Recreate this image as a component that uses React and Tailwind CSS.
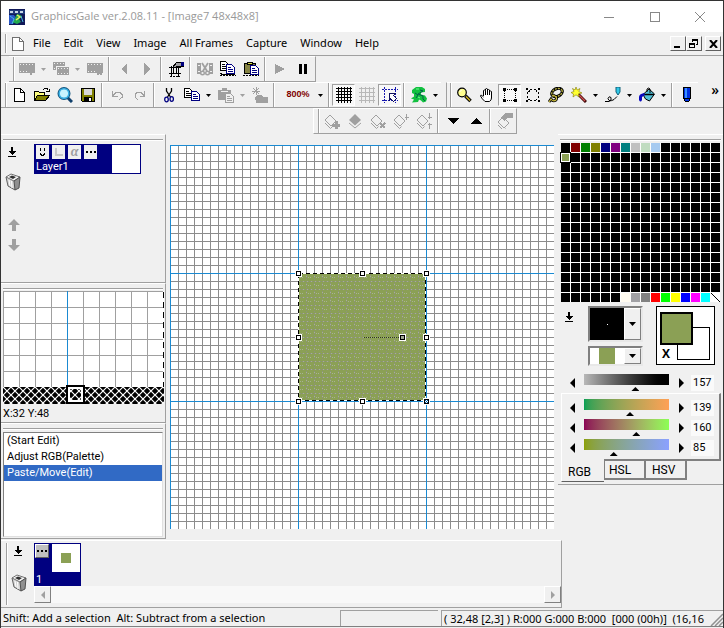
import { useState } from 'react';
import clsx from 'clsx';

const MENUS = ['File', 'Edit', 'View', 'Image', 'All Frames', 'Capture', 'Window', 'Help'];

const G = '#a0a0a0';

const Icon = ({ children, w = 16, h = 16 }) => (
  <svg width={w} height={h} viewBox={`0 0 ${w} ${h}`} fill="none" shapeRendering="crispEdges" aria-hidden="true">
    {children}
  </svg>
);

const Film = ({ x = 0, y = 0, w = 16, h = 10 }) => (
  <g>
    <rect x={x} y={y} width={w} height={h} fill={G} />
    <path d={`M${x + 1} ${y + 1.5}h${w - 1}M${x + 1} ${y + h - 1.5}h${w - 1}`} stroke="#f0f0f0" strokeDasharray="1 2" />
  </g>
);

const Page = ({ x, y, stroke = '#000', fill = '#fff' }) => (
  <g>
    <path d={`M${x + 0.5} ${y + 0.5}h5l3 3v6h-8z`} fill={fill} stroke={stroke} />
    <path d={`M${x + 2} ${y + 3.5}h3M${x + 2} ${y + 5.5}h5M${x + 2} ${y + 7.5}h5`} stroke={stroke} />
  </g>
);

const Diamond = ({ y = 3 }) => (
  <g shapeRendering="auto">
    <path d={`M1 ${y + 7}l5.5 5.5 2-2M1 ${y + 4}l5-5 6 6-5 5z`} stroke={G} />
  </g>
);

const icons = {
  doc: <Icon><path d="M2.5 1.5h7l4 4v9h-11z" fill="#fff" stroke="#707070" /><path d="M9.5 1.5v4h4" stroke="#707070" /></Icon>,
  // animation bar
  addFrame: <Icon><Film y={2} /><path d="M9 10h6l-2 2v2h-2v-2z" fill={G} /></Icon>,
  dupFrame: <Icon><Film y={1} w={12} h={8} /><path d="M3 5h13v10H3z" fill="#f0f0f0" /><Film x={4} y={6} w={12} h={8} /></Icon>,
  delFrame: <Icon><Film y={2} /><path d="M10 9l5 5M15 9l-5 5" stroke={G} strokeWidth="2" /></Icon>,
  prev: <Icon><path d="M11 2v12L5 8z" fill={G} /></Icon>,
  next: <Icon><path d="M5 2v12l6-6z" fill={G} /></Icon>,
  frameProp: (
    <Icon>
      <path d="M1 6.5h12M1 12.5h12M3.5 5v11M10.5 5v11M5.5 7v5M8.5 7v5" stroke="#000" />
      <path d="M4.5 6.5l4-5h5l2 1v3h-6l-2 1z" fill="#a0a0a4" stroke="#000" />
      <path d="M13 1h3v4h-3z" fill="#000080" />
      <path d="M2 15.5h10" stroke="#000" strokeDasharray="2 1" />
    </Icon>
  ),
  cutFrame: (
    <Icon>
      <path d="M0 2h4v11H0zM12 2h4v11h-4z" fill={G} />
      <path d="M1 4.5h2M1 10.5h2M13 4.5h2M13 10.5h2" stroke="#f0f0f0" />
      <g shapeRendering="auto">
        <path d="M5 2l5 8M11 2l-5 8" stroke={G} strokeWidth="1.8" />
        <circle cx="5.5" cy="12" r="1.8" stroke={G} strokeWidth="1.4" /><circle cx="10.5" cy="12" r="1.8" stroke={G} strokeWidth="1.4" />
      </g>
    </Icon>
  ),
  copyFrame: (
    <Icon>
      <path d="M0 14.5h16M0 12.5h3" stroke="#000" strokeDasharray="2 1" />
      <path d="M1 13h14" stroke="#000" />
      <Page x={0} y={0} /><Page x={6} y={3} stroke="#000080" />
    </Icon>
  ),
  pasteFrame: (
    <Icon>
      <path d="M0 14.5h16" stroke="#000" strokeDasharray="2 1" />
      <path d="M1.5 2.5h11v10h-11z" fill="#848242" stroke="#000" />
      <path d="M4.5 1.5h5v2h-5z" fill="#e0e040" stroke="#000" />
      <Page x={7} y={4} stroke="#000080" />
    </Icon>
  ),
  play: <Icon><path d="M3 3v10l10-5z" fill={G} /></Icon>,
  pause: <Icon><path d="M4 3h3v10H4zM9 3h3v10H9z" fill="#000" /></Icon>,
  // standard bar
  newFile: <Icon><path d="M3.5 1.5h6l4 4v9h-10z" fill="#fff" stroke="#000" /><path d="M9.5 1.5v4h4" stroke="#000" /></Icon>,
  open: (
    <Icon>
      <path d="M0.5 13.5v-9h4l1 1h5v2" fill="#ffff80" stroke="#000" />
      <path d="M0.5 13.5l3-5h12l-4 5z" fill="#808000" stroke="#000" />
      <path d="M9 2.5l2-1h2l1.5 2M12 4.5h3v-3" stroke="#000" />
    </Icon>
  ),
  browse: (
    <Icon>
      <g shapeRendering="auto">
        <path d="M10.5 10.5l4.500 4.500" stroke="#10406c" strokeWidth="3" />
        <circle cx="7" cy="6.5" r="5.5" fill="#c8f4ff" stroke="#10527c" strokeWidth="2" />
        <circle cx="7" cy="6.5" r="4.8" stroke="#3cb4e8" strokeWidth="1.5" />
      </g>
    </Icon>
  ),
  save: (
    <Icon>
      <path d="M1.5 1.5h13v13h-12l-1-1z" fill="#808000" stroke="#000" />
      <path d="M4 2h8v6H4z" fill="#d8d8d8" /><path d="M4 10h8v4H4z" fill="#000" /><path d="M9 11h2v3H9z" fill="#fff" />
    </Icon>
  ),
  undo: <Icon><path d="M3.5 4v5h5M4 8.5l3-3h4l2 2v3l-3 2" stroke={G} /></Icon>,
  redo: <Icon><path d="M12.5 4v5h-5M12 8.5l-3-3h-4l-2 2v3l3 2" stroke={G} /></Icon>,
  cut: (
    <Icon>
      <g shapeRendering="auto">
        <path d="M5.5 1v3l4 6M10.5 1v3l-4 6" stroke="#000" strokeWidth="1.3" />
        <ellipse cx="5.5" cy="12.5" rx="1.8" ry="2.3" stroke="#000080" strokeWidth="1.3" />
        <ellipse cx="10.7" cy="12" rx="1.7" ry="2.3" stroke="#000080" strokeWidth="1.3" />
      </g>
    </Icon>
  ),
  copy: <Icon><Page x={0} y={1} /><Page x={7} y={4} stroke="#000080" /></Icon>,
  paste: (
    <Icon>
      <path d="M0 3h4V1h5v2h4v10H0z" fill={G} />
      <path d="M3 4h7" stroke="#f0f0f0" />
      <Page x={7} y={6} stroke={G} fill="#f0f0f0" />
    </Icon>
  ),
  effect: (
    <Icon>
      <path d="M1 1l6 6M7 1l-6 6M4 0v8M0 4h8" stroke={G} />
      <path d="M3 10l3-2h4l1 2h5v6H4z" fill={G} />
    </Icon>
  ),
  grid: <Icon><path d="M0 1.5h16M0 4.5h16M0 7.5h16M0 10.5h16M0 13.5h16M2.5 0v16M5.5 0v16M8.5 0v16M11.5 0v16M14.5 0v16" stroke="#000" /></Icon>,
  gridLight: <Icon><path d="M0 1.5h16M0 5.5h16M0 9.5h16M0 13.5h16M2.5 0v16M6.5 0v16M10.5 0v16M14.5 0v16" stroke="#b8b8b8" /></Icon>,
  snap: (
    <Icon>
      <path d="M2.5 0v16M13.5 0v16M0 2.5h16M0 13.5h16" stroke="#1818b0" strokeDasharray="2 1" />
      <path d="M7.5 6.5h6l-2 2 3 3-3 3-3-3-1 2z" fill="#fff" stroke="#101060" />
    </Icon>
  ),
  dragon: (
    <Icon>
      <g shapeRendering="auto">
        <path d="M1 3l4-3h6l3 2v3l-4 .5v2l4 1 2 3-1 3-3 1-2-2-2-1-1 2.5-6 .5 2-3-3-1 3-2V7L1 6z" fill="#12c040" />
        <path d="M9 3l3 1-5 3 5 2v3l2 2M4 6l3 2-2 3" stroke="#006048" />
        <path d="M5 2h3M7 10l2 1" stroke="#70f890" />
      </g>
    </Icon>
  ),
  magnify: (
    <Icon>
      <g shapeRendering="auto">
        <path d="M9.5 9l5 5" stroke="#000" strokeWidth="3.5" /><path d="M10 9.5l4 4" stroke="#d8b820" strokeWidth="1.5" />
        <circle cx="6" cy="5.5" r="4.3" fill="#ffff90" stroke="#000" strokeWidth="1.2" />
        <path d="M3.5 5l2-2" stroke="#fff" />
      </g>
    </Icon>
  ),
  hand: (
    <Icon>
      <g shapeRendering="auto">
        <path d="M4.5 9V3.5q1-1 2 0V2q1-1 2 0v1q1-1 2 0v1.5q1-1 2 0V11q0 2-2 3.5H6Q3 12 1.5 9q0-2 3 1" fill="#fff" stroke="#000" />
        <path d="M6.5 3.5V8M8.5 3v5M10.5 4v4" stroke="#000" />
      </g>
    </Icon>
  ),
  selRect: (
    <Icon>
      <path d="M2.5 2.5h11v11h-11z" stroke="#000" strokeDasharray="1 1" />
      <path d="M1 1h3v3H1zM12 1h3v3h-3zM1 12h3v3H1zM12 12h3v3h-3z" fill="#000" />
    </Icon>
  ),
  selEllipse: (
    <Icon>
      <path d="M5 2.5h6M5 13.5h6M2.5 5v6M13.5 5v6" stroke="#000" strokeDasharray="2 2" />
      <path d="M3 4h1V3h1M12 4h-1V3M3 12h1v1M12 12h-1v1" stroke="#000" />
      <path d="M1 1h2v2H1zM13 1h2v2h-2zM1 13h2v2H1zM13 13h2v2h-2z" fill="#000" />
    </Icon>
  ),
  lasso: (
    <Icon>
      <g shapeRendering="auto">
        <ellipse cx="9" cy="5.5" rx="5.5" ry="3.8" transform="rotate(-25 9 5.5)" stroke="#000" strokeWidth="3.2" />
        <path d="M5 8q5 2 3 5-3 2-5-1l-2 3" stroke="#000" strokeWidth="2.8" />
        <ellipse cx="9" cy="5.5" rx="5.5" ry="3.8" transform="rotate(-25 9 5.5)" stroke="#b8b040" strokeWidth="1.3" strokeDasharray="2 1" />
        <path d="M5 8q5 2 3 5-3 2-5-1l-2 3" stroke="#d0c040" strokeWidth="1.2" />
      </g>
    </Icon>
  ),
  wand: (
    <Icon>
      <g shapeRendering="auto">
        <path d="M7 7l8 8" stroke="#400808" strokeWidth="3" /><path d="M8 8l6 6" stroke="#d05050" strokeWidth="1.3" />
        <path d="M5 0l1.2 3L9 1.5 7.8 4.5 11 6 7.5 6.8 8 10 5 7.8 2 10l.5-3L0 5.5l3-1L1.5 1.5 4 3z" fill="#ffff30" stroke="#807800" strokeWidth=".6" />
      </g>
    </Icon>
  ),
  curve: (
    <Icon>
      <g shapeRendering="auto">
        <path d="M0 14.5h4q3-1 2-4-2-2-3 1 1 4 6 1l3-3" stroke="#000" />
        <path d="M11 0h4v5l-2 3-2-3z" fill="#30c8e8" stroke="#106078" />
      </g>
    </Icon>
  ),
  fill: (
    <Icon>
      <g shapeRendering="auto">
        <path d="M4 7.5L10 2l5.5 5-5 7-4-2z" fill="#50c0d8" stroke="#000" />
        <path d="M5 7.5h10" stroke="#000" strokeWidth="1.5" />
        <path d="M8 5V2q2-2 3 0v4" stroke="#000" />
        <path d="M5 6q-5 1-5 4v3q1.5 3 3 0V10l3-2z" fill="#0808c0" />
      </g>
    </Icon>
  ),
  pen: (
    <Icon>
      <path d="M4.5 0.5h7v11l-2 3h-3l-2-3z" fill="#0030e0" stroke="#000" />
      <path d="M6 1h2v10H6z" fill="#3890ff" /><path d="M5 11.5h6M6 14h4" stroke="#000" />
    </Icon>
  ),
  // layer bar
  addLayer: <Icon><Diamond /><path d="M8 12h8M12 8v8" stroke={G} strokeWidth="3" /></Icon>,
  dupLayer: <Icon><g shapeRendering="auto"><path d="M2 7l6-6 6 6-6 5.5z" fill={G} /><path d="M2 10l6 5 6-5" stroke={G} /></g></Icon>,
  delLayer: <Icon><Diamond /><path d="M10 10l5 5M15 10l-5 5" stroke={G} strokeWidth="2" /></Icon>,
  mergeLayer: <Icon><Diamond /><path d="M13.5 1v6M11.5 4.5h4" stroke={G} strokeWidth="1.5" /></Icon>,
  mergeAll: <Icon><Diamond /><path d="M13.5 0v6M11.5 4.5h4M13.5 16v-6M11.5 11.5h4" stroke={G} strokeWidth="1.5" /></Icon>,
  down: <Icon><path d="M2 5h12l-6 6z" fill="#000" /></Icon>,
  up: <Icon><path d="M2 11h12L8 5z" fill="#000" /></Icon>,
  layerProp: <Icon><Diamond y={5} /><path d="M4 4l4-4h8v5h-5L7 8z" fill={G} /></Icon>,
};

const ANIM_BAR = ['addFrame', '>g', 'dupFrame', '>g', 'delFrame', '|', 'prev', 'next', '|', 'frameProp', '|', 'cutFrame', 'copyFrame', 'pasteFrame', '|', 'play', 'pause'];
const EDIT_BAR = ['newFile', 'open', 'browse', 'save', '|', 'undo', 'redo', '|', 'cut', 'copy', '>', 'paste', '>g', 'effect', '|', '800%', '>', '|', '*grid', 'gridLight', '*snap', '|', 'dragon', '>'];
const TOOL_BAR = ['magnify', 'hand', '*selRect', 'selEllipse', 'lasso', 'wand', '>', 'curve', '>', 'fill', '>', '|', 'pen'];
const LAYER_BAR = ['addLayer', 'dupLayer', 'delLayer', 'mergeLayer', 'mergeAll', '|', 'down', 'up', '|', 'layerProp'];

const ToolItem = ({ id }) => {
  if (id === '|') return <span className="mx-0.5 w-0.5 self-stretch border-r border-white border-l border-l-[#a0a0a0]" />;
  if (id[0] === '>') {
    return (
      <button aria-label="More" className={clsx('flex h-[22px] w-[11px] items-center justify-center', id === '>g' ? 'text-[#a0a0a0]' : 'text-black')}>
        <svg width="5" height="3" viewBox="0 0 5 3"><path d="M0 0h5L2.5 3z" fill="currentColor" /></svg>
      </button>
    );
  }
  if (id === '800%') {
    return <button className="h-[22px] w-[38px] pl-1 font-['Liberation_Sans',sans-serif] text-[9px] font-bold text-[#800000]">800%</button>;
  }
  const pressed = id[0] === '*';
  const name = pressed ? id.slice(1) : id;
  return (
    <button
      aria-label={name}
      aria-pressed={pressed}
      className={clsx('flex h-[22px] w-[23px] items-center justify-center border', pressed ? 'border-t-[#a0a0a0] border-r-white border-b-white border-l-[#a0a0a0] bg-[#f8f8f8]' : 'border-transparent')}
    >
      {icons[name]}
    </button>
  );
};

const ToolBar = ({ items, className }) => (
  <div className={clsx('flex items-center border-t border-t-white', className)}>
    <span className="w-0.5 self-stretch border-r border-white border-l border-l-[#a0a0a0]" />
    {items.map((id, i) => <ToolItem key={i} id={id} />)}
  </div>
);

const PanelGrip = () => <div className="mx-0.5 mt-1 h-0.5 border-t border-[#a0a0a0] border-b border-b-white" />;

const DownMark = () => (
  <Icon w={10} h={10}><path d="M4 0h2v4h3L5 8 1 4h3zM1 9h8v1H1z" fill="#000" /></Icon>
);

const Trash = () => (
  <svg width="16" height="18" viewBox="0 0 16 18" aria-hidden="true">
    <path d="M1 4l2 9 7 4 4-11z" fill="#d4d4d4" stroke="#606060" />
    <path d="M1 4l5-3 9 3-6 4z" fill="#f4f4f4" stroke="#707070" />
    <path d="M4 4l3-1.5 4 1.5-3 2z" fill="#303030" />
    <path d="M9 8l1 9 4-2 1-11z" fill="#909090" stroke="#505050" />
    <path d="M4 7l1 6M6.5 8l.5 7" stroke="#fff" />
  </svg>
);

const BigArrow = ({ flip }) => (
  <svg width="12" height="12" viewBox="0 0 12 12" className={clsx(flip && 'rotate-180')} aria-hidden="true">
    <path d="M6 0l6 6H8v6H4V6H0z" fill={G} />
  </svg>
);

const LayerPanel = () => (
  <section aria-label="Layers" className="h-[149px] border-t border-r border-b border-t-white border-r-[#a0a0a0] border-b-[#a0a0a0]">
    <PanelGrip />
    <div className="flex pt-[3px] pl-1">
      <div className="flex w-[29px] flex-col items-start">
        <button aria-label="Layer menu" className="mt-[3px] ml-0.5"><DownMark /></button>
        <button aria-label="Delete layer" className="mt-4"><Trash /></button>
        <button aria-label="Move up" className="mt-7 ml-[3px]"><BigArrow /></button>
        <button aria-label="Move down" className="mt-2 ml-[3px]"><BigArrow flip /></button>
      </div>
      <div className="flex h-[30px] w-[107px] border border-[#000080] bg-[#000080] text-[11px] text-white">
        <div className="w-[77px] shrink-0">
          <div className="flex gap-[3px] pl-px text-black">
            <button aria-label="Visible" className="h-3.5 w-[13px] bg-[#f0f0f0]">
              <Icon w={13} h={14}><path d="M4.5 3v3M8.5 3v3M4.5 8v1l1 1h2l1-1v-1" stroke="#000" /></Icon>
            </button>
            <button aria-label="Lock" className="h-3.5 w-[13px] bg-[#f0f0f0]">
              <Icon w={13} h={14}><path d="M3.5 3v7h7" stroke="#c8c8c8" strokeWidth="2" /></Icon>
            </button>
            <button className="h-3.5 w-[13px] bg-[#f0f0f0] font-['Liberation_Serif',serif] text-[14px] leading-3 font-bold text-[#a0a0a0] italic">α</button>
            <button aria-label="Layer options" className="h-3.5 w-[13px] bg-[#f0f0f0]">
              <Icon w={13} h={14}><path d="M2 6h2v2H2zM6 6h2v2H6zM10 6h2v2h-2z" fill="#000" /></Icon>
            </button>
          </div>
          <div className="pl-px leading-4">Layer1</div>
        </div>
        <div className="flex-1 bg-white" />
      </div>
    </div>
  </section>
);

const PreviewPanel = () => (
  <section aria-label="Preview" className="h-[140px] border-t border-r border-b border-t-white border-r-[#a0a0a0] border-b-[#a0a0a0]">
    <PanelGrip />
    <svg width="161" height="113" viewBox="0 0 161 113" shapeRendering="crispEdges" className="mt-px ml-0.5 block">
      <defs>
        <pattern id="cells" width="16" height="16" patternUnits="userSpaceOnUse">
          <path d="M0 0h16v1H0zM0 0h1v16H0z" fill="#a0a0a0" />
        </pattern>
        <pattern id="hatch" width="8" height="8" patternUnits="userSpaceOnUse">
          <rect width="8" height="8" fill="#000" />
          <path d="M0 0l8 8M8 0L0 8" stroke="#fff" strokeWidth="1.2" shapeRendering="auto" />
        </pattern>
      </defs>
      <rect width="161" height="96" fill="#fff" />
      <rect width="161" height="96" fill="url(#cells)" />
      <rect x="64" width="1" height="96" fill="#1a8ad2" />
      <path d="M160.5 0v96" stroke="#fff" />
      <path d="M160.5 1v95" stroke="#000" strokeDasharray="6 4" />
      <rect y="96" width="161" height="17" fill="url(#hatch)" />
      <rect x="64" y="95" width="17" height="17" stroke="#000" strokeWidth="2" fill="none" />
      <rect x="66" y="97" width="13" height="13" stroke="#fff" strokeWidth="2" fill="none" />
    </svg>
    <div className="pt-0.5 pl-0.5 text-[11px] leading-4">X:32 Y:48</div>
  </section>
);

const HistoryPanel = () => (
  <section aria-label="History" className="h-[116px] border-t border-r border-b border-t-white border-r-[#a0a0a0] border-b-[#a0a0a0]">
    <PanelGrip />
    <ul role="listbox" className="mt-0.5 ml-0.5 h-[105px] w-[160px] border border-t-[#808080] border-r-[#e0e0e0] border-b-[#e0e0e0] border-l-[#808080] bg-white text-[11px] leading-4">
      <li role="option" aria-selected="false" className="px-[3px]">(Start Edit)</li>
      <li role="option" aria-selected="false" className="px-[3px]">Adjust RGB(Palette)</li>
      <li role="option" aria-selected="true" className="bg-[#316ac5] px-[3px] text-white">Paste/Move(Edit)</li>
    </ul>
  </section>
);

const HANDLES = [[128, 128], [192, 128], [256, 128], [128, 192], [256, 192], [128, 256], [192, 256], [256, 256], [232, 192]];

const Canvas = () => (
  <main className="min-w-0 flex-1 px-1 pt-[11px]">
    <svg width="100%" height="384" shapeRendering="crispEdges" className="block bg-white">
      <defs>
        <pattern id="pixels" width="8" height="8" patternUnits="userSpaceOnUse">
          <path d="M0 0h8v1H0zM0 0h1v8H0z" fill="#8c8c8c" />
        </pattern>
        <pattern id="paint" width="8" height="8" patternUnits="userSpaceOnUse">
          <rect width="8" height="8" fill="#8ba055" />
          <path d="M0 .5h8M.5 0v8" stroke="#8c9080" strokeDasharray="1 1" />
          <path d="M1 .5h1M5 .5h1M.5 3v1M4 4.5h1M2 4.5h1" stroke="#a8b294" />
        </pattern>
      </defs>
      <rect width="100%" height="384" fill="url(#pixels)" />
      {[0, 128, 256].map((n) => (
        <g key={n} fill="#1a8ad2">
          <rect y={n} width="100%" height="1" />
          <rect x={n} width="1" height="384" />
        </g>
      ))}
      <rect x="128" y="128" width="128" height="128" fill="url(#paint)" />
      <rect x="128.5" y="128.5" width="127" height="127" fill="none" stroke="#fff" />
      <rect x="128.5" y="128.5" width="127" height="127" fill="none" stroke="#000" strokeDasharray="4 3" />
      <path d="M194 192.5h36" stroke="#303820" strokeDasharray="1 1" />
      {HANDLES.map(([x, y]) => (
        <g key={`${x}-${y}`}>
          <rect x={x - 3} y={y - 3} width="7" height="7" fill="#fff" />
          <rect x={x - 1.5} y={y - 1.5} width="4" height="4" fill={x === 232 ? '#a0a890' : '#fff'} stroke="#000" />
        </g>
      ))}
      <path d="M255 255l3 3M255 258l3-3" stroke="#0060a8" />
    </svg>
  </main>
);

const PALETTE = Array(256).fill('#000000');
['#800000', '#008000', '#808000', '#000080', '#800080', '#008080', '#c0c0c0', '#c0dcc0', '#a6caf0'].forEach((c, i) => { PALETTE[i + 1] = c; });
PALETTE[16] = '#8ba055';
['#fffbf0', '#a0a0a4', '#808080', '#ff0000', '#00ff00', '#ffff00', '#0000ff', '#ff00ff', '#00ffff', '#ffffff'].forEach((c, i) => { PALETTE[246 + i] = c; });

const Step = ({ left, label }) => (
  <button aria-label={label} className="h-5 w-3">
    <svg width="5" height="10" viewBox="0 0 5 10" className={clsx('mx-auto', !left && 'rotate-180')}><path d="M5 0v10L0 5z" fill="#000" /></svg>
  </button>
);

const Slider = ({ label, initial, gradient }) => {
  const [value, setValue] = useState(initial);
  return (
    <div className="flex h-5 items-center">
      <Step left label={`${label} down`} />
      <input
        type="range"
        min="0"
        max="255"
        aria-label={label}
        value={value}
        onChange={(e) => setValue(Number(e.target.value))}
        className={clsx(
          'mx-1.5 h-[18px] w-[85px] appearance-none bg-[length:100%_11px] bg-no-repeat [&::-webkit-slider-runnable-track]:h-[18px] [&::-webkit-slider-thumb]:mt-[13px] [&::-webkit-slider-thumb]:h-1 [&::-webkit-slider-thumb]:w-2 [&::-webkit-slider-thumb]:appearance-none [&::-webkit-slider-thumb]:bg-black [&::-webkit-slider-thumb]:[clip-path:polygon(50%_0,100%_100%,0_100%)]',
          gradient
        )}
      />
      <Step label={`${label} up`} />
      <input
        type="text"
        aria-label={`${label} value`}
        value={value}
        onChange={(e) => setValue(Number(e.target.value) || 0)}
        className="ml-1 h-4 w-[23px] bg-[#fafafa] px-0.5 text-[11px] leading-4"
      />
    </div>
  );
};

const Combo = ({ label, big }) => (
  <div className={clsx('relative flex w-[55px] border-2 border-t-[#808080] border-r-[#e8e8e8] border-b-[#e8e8e8] border-l-[#808080] bg-white', big ? 'h-9' : 'h-5')}>
    <div className={clsx('pointer-events-none flex flex-1 items-center justify-center', big && 'bg-black')}>
      <span className={big ? 'size-px bg-white' : 'h-4 w-4 bg-[#8ba055]'} />
    </div>
    <div className="pointer-events-none flex w-[17px] items-center justify-center border border-t-white border-r-[#808080] border-b-[#808080] border-l-white bg-[#f0f0f0]">
      <svg width="7" height="4" viewBox="0 0 7 4"><path d="M0 0h7L3.5 4z" fill="#000" /></svg>
    </div>
    <select aria-label={label} className="absolute inset-0 h-full w-full opacity-0" />
  </div>
);

const ColorPanel = () => (
  <aside aria-label="Palette" className="h-[351px] w-[165px] shrink-0 border-t border-b border-t-white border-b-[#a0a0a0]">
    <PanelGrip />
    <div className="mt-0.5 ml-[3px] grid w-[159px] grid-cols-16 gap-px bg-white">
      {PALETTE.map((c, i) => (
        <button
          key={i}
          aria-label={`Color ${i}`}
          className={clsx('h-[9px]', i === 16 && 'border border-white outline outline-black')}
          style={{ background: i === 255 ? 'linear-gradient(45deg,#fff 45%,#000 45%,#000 55%,#fff 55%)' : c }}
        />
      ))}
    </div>
    <div className="flex items-start pt-1 pr-2 pl-1.5">
      <button aria-label="Palette menu" className="mt-1.5"><DownMark /></button>
      <div className="ml-3.5 flex flex-col gap-1">
        <Combo label="Brush" big />
        <Combo label="Brush colour" />
      </div>
      <div className="relative ml-auto h-[59px] w-[59px] border border-black bg-white">
        <span className="absolute right-1 bottom-1 h-[33px] w-[33px] border border-black bg-white" />
        <span className="absolute top-[5px] left-[3px] h-[33px] w-[33px] border-2 border-black bg-[#8ba055]" />
        <button aria-label="Swap colours" className="absolute bottom-0.5 left-[5px] font-['Open_Sans',sans-serif] text-xs leading-4 font-bold">X</button>
      </div>
    </div>
    <div className="mt-[7px] pl-2">
      <Slider label="Level" initial={157} gradient="bg-linear-to-r from-[#b8b8b8] to-black" />
    </div>
    <div className="mr-0.5 ml-[3px] h-[68px] border-t border-r-2 border-b-2 border-l border-t-white border-r-[#808080] border-b-[#808080] border-l-white pt-1 pl-1">
      <Slider label="Red" initial={139} gradient="bg-linear-to-r from-[#00a055] to-[#ffa055]" />
      <Slider label="Green" initial={160} gradient="bg-linear-to-r from-[#8b0055] to-[#8bff55]" />
      <Slider label="Blue" initial={85} gradient="bg-linear-to-r from-[#8ba000] to-[#8ba0ff]" />
    </div>
    <div role="tablist" className="ml-[3px] flex items-start text-xs">
      <button role="tab" aria-selected="true" className="relative -mt-0.5 h-[23px] w-[43px] border-b border-l border-b-[#606060] border-l-white bg-[#f0f0f0] pt-1 pl-1.5 text-left">RGB</button>
      <button role="tab" aria-selected="false" className="h-[19px] w-[42px] border-r-2 border-b-2 border-l border-[#808080] pl-1 text-left">HSL</button>
      <button role="tab" aria-selected="false" className="h-[19px] w-[41px] border-r-2 border-b-2 border-[#808080] pl-1.5 text-left">HSV</button>
    </div>
  </aside>
);

const ScrollButton = ({ right }) => (
  <button aria-label={right ? 'Scroll right' : 'Scroll left'} className="flex h-[17px] w-[17px] items-center justify-center border border-t-white border-r-[#808080] border-b-[#808080] border-l-white bg-[#f0f0f0]">
    <svg width="4" height="8" viewBox="0 0 4 8" className={clsx(right && 'rotate-180')}><path d="M4 0v8L0 4z" fill={G} /></svg>
  </button>
);

const FramePanel = () => (
  <section aria-label="Frames" className="flex h-[68px] w-[561px] max-w-full border-t border-r border-b border-t-white border-r-[#a0a0a0] border-b-[#a0a0a0]">
    <span className="my-0.5 ml-[5px] w-0.5 border-r border-white border-l border-l-[#a0a0a0]" />
    <div className="flex w-[26px] flex-col items-start pl-[3px]">
      <button aria-label="Frame menu" className="mt-[5px] ml-0.5"><DownMark /></button>
      <button aria-label="Delete frame" className="mt-[18px]"><Trash /></button>
    </div>
    <div className="flex flex-1 flex-col">
      <div className="mt-0.5 flex h-[43px] w-[47px] justify-between overflow-hidden border border-[#000080] bg-[#000080] text-[11px] text-white">
        <div>
          <button aria-label="Frame options" className="block h-3.5 w-[14px] border border-t-white border-r-[#606060] border-b-[#606060] border-l-white bg-[#c0c0c0]">
            <Icon w={12} h={12}><path d="M1 5h2v2H1zM5 5h2v2H5zM9 5h2v2H9z" fill="#000" /></Icon>
          </button>
          <div className="mt-3.5 pl-px leading-4">1</div>
        </div>
        <div className="flex h-7 w-7 items-center justify-center bg-white"><span className="h-2.5 w-2.5 bg-[#8ba055]" /></div>
      </div>
      <div className="flex justify-between bg-[#f8f8f8]">
        <ScrollButton />
        <ScrollButton right />
      </div>
    </div>
  </section>
);

const StatusBar = () => (
  <footer className="flex h-[19px] items-stretch border-b border-[#808080] pt-0.5 text-[11px] leading-4 font-['Noto_Sans',sans-serif]">
    <div className="w-[47%] pl-0.5 whitespace-pre">Shift: Add a selection  Alt: Subtract from a selection</div>
    <div className="mr-[3px] flex-1 border-t border-l border-[#a0a0a0]" />
    <div className="flex w-[282px] justify-between border-t border-l border-[#a0a0a0]">
      <div className="w-[263px] overflow-hidden pl-0.5 whitespace-pre">( 32,48 [2,3] ) R:000 G:000 B:000  [000 (00h)]  (16,16</div>
      <svg width="13" height="13" viewBox="0 0 13 13" className="mt-0.5"><path d="M1 13L13 1M5 13l8-8M9 13l4-4" stroke="#909090" strokeWidth="1.5" /></svg>
    </div>
  </footer>
);

const TitleBar = () => (
  <header className="flex h-[31px] items-center bg-white pl-2 text-[#999] font-['Open_Sans',sans-serif]">
    <svg width="16" height="16" viewBox="0 0 16 16">
      <rect width="16" height="16" fill="#101858" />
      <path d="M0 1h16v4H0z" fill="#203878" /><path d="M1 2h3v2H1zM6 2h3v2H6zM11 2h3v2h-3z" fill="#c8d8e8" />
      <path d="M0 6h5l2 3-3 6H0z" fill="#2858c8" />
      <path d="M9 5l4 2-3 3 2 3-4 2-5-2 3-3 1-4z" fill="#20a850" /><path d="M8 6l3 2-4 3" stroke="#e8f060" fill="none" strokeWidth="1.5" />
      <path d="M1 7l4 3-2 5M12 7l2 6" stroke="#48b8e0" fill="none" />
    </svg>
    <h1 className="ml-1.5 text-[11px]">GraphicsGale ver.2.08.11 - [Image7 48x48x8]</h1>
    <div className="ml-auto flex">
      <button aria-label="Minimize" className="flex h-[30px] w-[46px] items-center justify-center"><Icon w={10} h={10}><path d="M0 5.5h10" stroke="#888" /></Icon></button>
      <button aria-label="Maximize" className="flex h-[30px] w-[45px] items-center justify-center"><Icon w={10} h={10}><path d="M.5.5h9v9h-9z" stroke="#888" /></Icon></button>
      <button aria-label="Close" className="flex h-[30px] w-[46px] items-center justify-center">
        <svg width="10" height="10" viewBox="0 0 10 10"><path d="M0 0l10 10M10 0L0 10" stroke="#888" /></svg>
      </button>
    </div>
  </header>
);

const mdiButton = 'flex h-[15px] w-4 items-center justify-center border border-t-white border-r-[#606060] border-b-[#606060] border-l-white bg-[#f0f0f0]';

const MenuBar = () => (
  <nav className="flex h-6 items-center gap-px border-b border-[#a0a0a0] pr-0.5 pl-1 font-['Noto_Sans',sans-serif] text-[11px]">
    <span className="h-[19px] w-0.5 border-r border-white border-l border-l-[#a0a0a0]" />
    <span className="ml-0.5">{icons.doc}</span>
    {MENUS.map((m) => <button key={m} className="px-1.5">{m}</button>)}
    <div className="ml-auto flex">
      <button aria-label="Minimize image" className={mdiButton}><Icon w={12} h={11}><path d="M2 8h6v2H2z" fill="#000" /></Icon></button>
      <button aria-label="Restore image" className={mdiButton}>
        <Icon w={12} h={11}><path d="M4.5 3.5v-2h5v5h-2M1.5 5.5h5v4h-5z" stroke="#000" /><path d="M4 1.5h6M1 5.5h6" stroke="#000" strokeWidth="2" /></Icon>
      </button>
      <button aria-label="Close image" className={clsx(mdiButton, 'ml-[3px]')}>
        <svg width="9" height="8" viewBox="0 0 9 8"><path d="M1 0l7 8M8 0L1 8" stroke="#000" strokeWidth="2" /></svg>
      </button>
    </div>
  </nav>
);

export default function App() {
  return (
    <div className="flex min-h-screen w-full flex-col overflow-hidden border-x border-t border-[#333] bg-[#f0f0f0] font-['Roboto',sans-serif] text-black">
      <TitleBar />
      <MenuBar />
      <div className="h-[26px]">
        <ToolBar items={ANIM_BAR} className="ml-2 h-[26px] w-fit border-r border-b border-r-[#a0a0a0] border-b-[#a0a0a0] pr-px pl-1" />
      </div>
      <div className="flex h-[26px] items-stretch border-b border-[#a0a0a0] pl-1">
        <ToolBar items={EDIT_BAR} />
        <ToolBar items={TOOL_BAR} className="ml-[5px] border-l border-l-[#a0a0a0] pl-[3px]" />
        <button aria-label="More tools" className="mr-1 ml-auto self-start font-['Open_Sans',sans-serif] text-sm leading-4 font-semibold">»</button>
      </div>
      <div className="h-[26px]">
        <ToolBar items={LAYER_BAR} className="ml-[312px] h-[26px] w-fit border-r border-b border-l border-r-[#a0a0a0] border-b-[#a0a0a0] border-l-white pl-1" />
      </div>
      <div className="flex h-[406px]">
        <div className="w-[165px] shrink-0">
          <LayerPanel />
          <PreviewPanel />
          <HistoryPanel />
        </div>
        <Canvas />
        <ColorPanel />
      </div>
      <FramePanel />
      <StatusBar />
    </div>
  );
}
